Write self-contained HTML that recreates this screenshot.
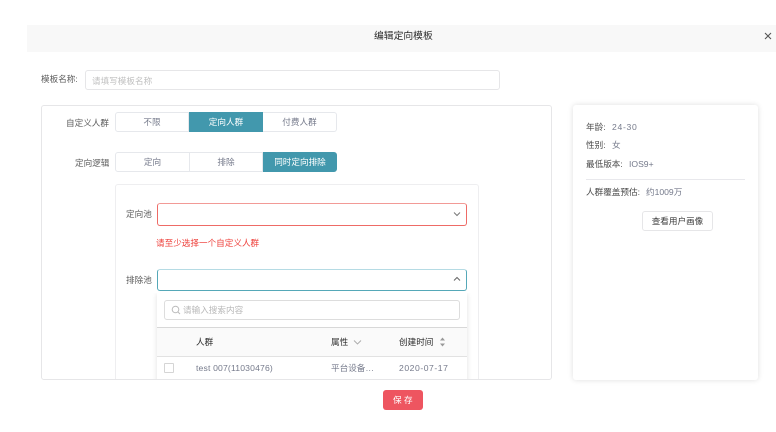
<!DOCTYPE html>
<html lang="zh">
<head>
<meta charset="utf-8">
<style>
html,body{margin:0;padding:0;background:#fff}
#root{position:relative;width:776px;height:432px;overflow:hidden;background:#fff;font-family:"Liberation Sans","Noto Sans CJK SC",sans-serif;font-size:8.6px;color:#555;filter:blur(.3px)}
.a{position:absolute;box-sizing:border-box}
.t{position:absolute;white-space:nowrap;line-height:12px}
.seg{position:absolute;box-sizing:border-box;height:20px;text-align:center;line-height:18px;background:#fff;border:1px solid #e6e8ec;color:#757a8b}
.on{background:#4298ad;border-color:#4298ad;color:#fff}
</style>
</head>
<body>
<div id="root">
<div class="a" style="left:27px;top:25px;width:749px;height:27px;background:#f8f8f8"></div>
<div class="t" style="left:374px;top:31px;font-size:9.8px;color:#2b2b2b">编辑定向模板</div>
<svg class="a" style="left:764px;top:32px" width="8" height="8" viewBox="0 0 8 8"><path d="M1 1L7 7M7 1L1 7" stroke="#555" stroke-width="1.1" fill="none"/></svg>

<div class="t" style="left:41px;top:73px;color:#5c5c5c">模板名称:</div>
<div class="a" style="left:85px;top:70px;width:415px;height:20px;border:1px solid #e6e6e8;border-radius:3px"></div>
<div class="t" style="left:92px;top:75px;color:#c0c0c0">请填写模板名称</div>

<div class="t" style="left:66px;top:117px;color:#5c5c5c">自定义人群</div>
<div class="seg" style="left:115px;top:112px;width:74px;border-radius:3px 0 0 3px">不限</div>
<div class="seg on" style="left:189px;top:112px;width:74px">定向人群</div>
<div class="seg" style="left:263px;top:112px;width:74px;border-radius:0 3px 3px 0;border-left:0">付费人群</div>

<div class="t" style="left:75px;top:157px;color:#5c5c5c">定向逻辑</div>
<div class="seg" style="left:115px;top:152px;width:75px;border-radius:3px 0 0 3px">定向</div>
<div class="seg" style="left:189px;top:152px;width:74px">排除</div>
<div class="seg on" style="left:263px;top:152px;width:74px;border-radius:0 3px 3px 0">同时定向排除</div>

<div class="a" style="left:115px;top:184px;width:364px;height:196px;border:1px solid #eeeef0;border-bottom:0;border-radius:3px 3px 0 0"></div>

<div class="t" style="left:126px;top:208px;color:#5c5c5c">定向池</div>
<div class="a" style="left:157px;top:203px;width:310px;height:23px;border:1px solid #ee6b66;border-top-color:#f29a96;border-radius:3px"></div>
<svg class="a" style="left:453px;top:211px" width="8" height="6" viewBox="0 0 8 6"><path d="M1 1.500L4 4.500L7 1.500" stroke="#777" stroke-width="1" fill="none"/></svg>
<div class="t" style="left:156px;top:237px;color:#ee3f3a">请至少选择一个自定义人群</div>

<div class="t" style="left:126px;top:274px;color:#5c5c5c">排除池</div>
<div class="a" style="left:157px;top:269px;width:310px;height:22px;border:1px solid #55a8b8;border-top-color:#b5dbe4;border-radius:3px"></div>
<svg class="a" style="left:453px;top:276px" width="8" height="6" viewBox="0 0 8 6"><path d="M1 4.500L4 1.500L7 4.500" stroke="#666" stroke-width="1" fill="none"/></svg>

<div class="a" style="left:147px;top:293px;width:330px;height:87px;overflow:hidden">
<div class="a" style="left:10px;top:0;width:310px;height:110px;background:#fff;box-shadow:0 1px 5px rgba(0,0,0,.12)"></div>
</div>
<div class="a" style="left:164px;top:300px;width:296px;height:20px;border:1px solid #ddd;border-radius:3px"></div>
<svg class="a" style="left:171px;top:305px" width="10" height="10" viewBox="0 0 10 10"><circle cx="4.500" cy="4.500" r="3.300" stroke="#bbb" fill="none"/><path d="M7 7L9 9" stroke="#bbb"/></svg>
<div class="t" style="left:183px;top:304px;color:#b8b8b8">请输入搜索内容</div>
<div class="a" style="left:157px;top:327px;width:310px;height:30px;background:#fafafa;border-top:1px solid #d8d8d8;border-bottom:1px solid #e2e2e2"></div>
<div class="t" style="left:196px;top:336px;color:#2b2b2b">人群</div>
<div class="t" style="left:331px;top:336px;color:#2b2b2b">属性</div>
<svg class="a" style="left:353px;top:339px" width="9" height="7" viewBox="0 0 9 7"><path d="M1 1.500L4.500 5L8 1.500" stroke="#aaa" stroke-width=".9" fill="none"/></svg>
<div class="t" style="left:399px;top:336px;color:#2b2b2b">创建时间</div>
<svg class="a" style="left:439px;top:337px" width="7" height="10" viewBox="0 0 7 10"><path d="M3.500 .5L6 3.500H1ZM3.500 9.500L6 6.500H1Z" fill="#999"/></svg>
<div class="a" style="left:164px;top:363px;width:10px;height:10px;border:1px solid #d5d5d5;border-radius:1px"></div>
<div class="t" style="left:196px;top:362px;color:#757a8b;letter-spacing:.17px">test 007(11030476)</div>
<div class="t" style="left:331px;top:362px;color:#757a8b">平台设备…</div>
<div class="t" style="left:399px;top:362px;color:#757a8b;letter-spacing:.55px">2020-07-17</div>

<div class="a" style="left:41px;top:105px;width:511px;height:275px;border:1px solid #e6e6e8;border-radius:3px"></div>

<div class="a" style="left:573px;top:105px;width:185px;height:275px;border-radius:3px;background:#fff;box-shadow:0 0 6px rgba(0,0,0,.13)"></div>
<div class="t" style="left:586px;top:121px;color:#4a4a4a">年龄:</div>
<div class="t" style="left:612px;top:121px;color:#757a8b;letter-spacing:.7px">24-30</div>
<div class="t" style="left:586px;top:139px;color:#4a4a4a">性别:</div>
<div class="t" style="left:612px;top:139px;color:#757a8b">女</div>
<div class="t" style="left:586px;top:158px;color:#4a4a4a">最低版本:</div>
<div class="t" style="left:629px;top:158px;color:#757a8b">IOS9+</div>
<div class="a" style="left:586px;top:179px;width:159px;height:1px;background:#e8e8ec"></div>
<div class="t" style="left:586px;top:186px;color:#4a4a4a">人群覆盖预估:</div>
<div class="t" style="left:646px;top:186px;color:#757a8b">约1009万</div>
<div class="a" style="left:642px;top:211px;width:71px;height:20px;border:1px solid #e6e6e8;border-radius:3px;text-align:center;line-height:18px;color:#3c3c3c">查看用户画像</div>

<div class="a" style="left:383px;top:390px;width:40px;height:20px;background:#ee5560;border-radius:3px"></div>
<div class="t" style="left:393px;top:394px;color:#fff">保</div>
<div class="t" style="left:404px;top:394px;color:#fff">存</div>
</div>
</body>
</html>
